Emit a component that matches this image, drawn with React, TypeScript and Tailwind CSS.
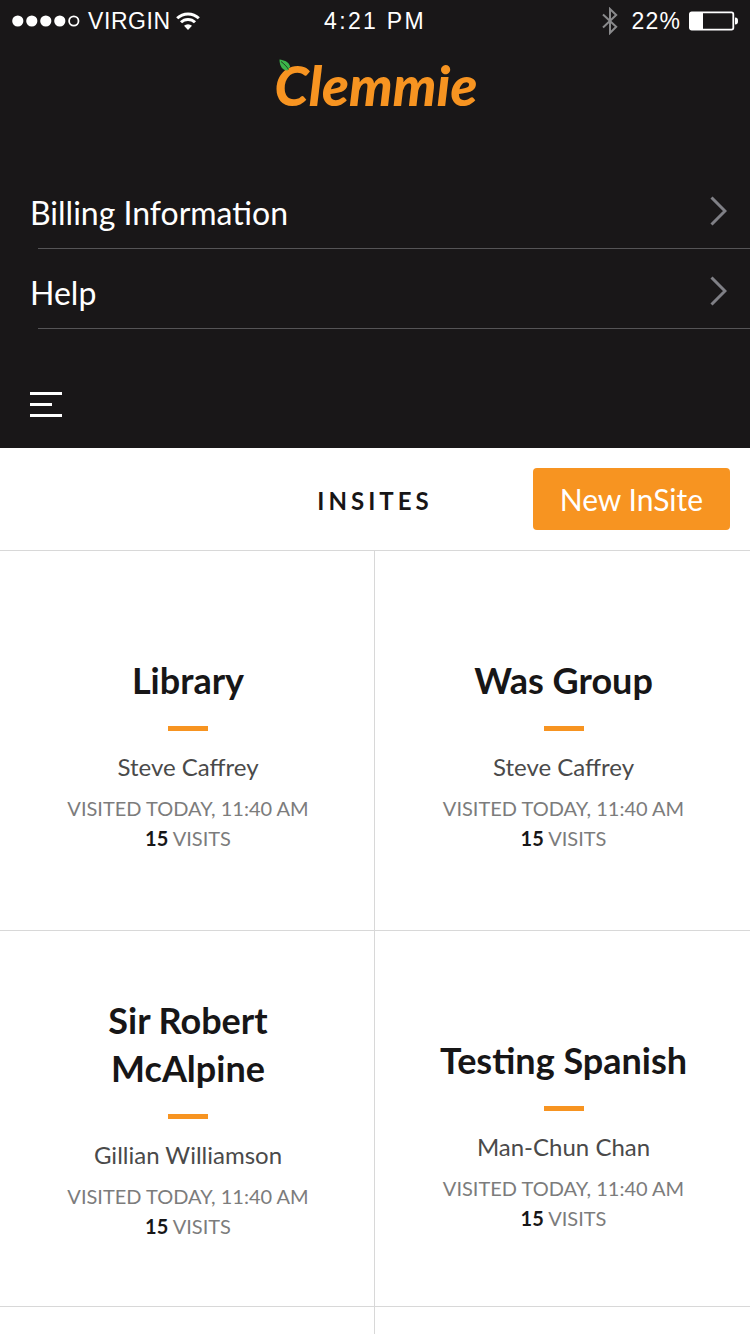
import React from "react";

type InSite = {
  title: string;
  owner: string;
  visited: string;
  visits: number;
  longTitle?: boolean;
};

const menuLinks = ["Billing Information", "Help"];

const insites: InSite[] = [
  { title: "Library", owner: "Steve Caffrey", visited: "VISITED TODAY, 11:40 AM", visits: 15 },
  { title: "Was Group", owner: "Steve Caffrey", visited: "VISITED TODAY, 11:40 AM", visits: 15 },
  { title: "Sir Robert McAlpine", owner: "Gillian Williamson", visited: "VISITED TODAY, 11:40 AM", visits: 15, longTitle: true },
  { title: "Testing Spanish", owner: "Man-Chun Chan", visited: "VISITED TODAY, 11:40 AM", visits: 15 },
];

function SignalDots() {
  return (
    <svg width="68" height="12" viewBox="0 0 68 12" fill="#fff" aria-hidden="true">
      <circle cx="5.8" cy="6" r="5.6" />
      <circle cx="19.8" cy="6" r="5.6" />
      <circle cx="33.8" cy="6" r="5.6" />
      <circle cx="47.8" cy="6" r="5.6" />
      <circle cx="61.8" cy="6" r="4.7" fill="none" stroke="#fff" strokeWidth="1.8" />
    </svg>
  );
}

function WifiIcon() {
  return (
    <svg width="24" height="18" viewBox="0 0 24 18" fill="none" stroke="#fff" strokeWidth="3" aria-hidden="true">
      <path d="M1.2 6.3a15.4 15.4 0 0 1 21.6 0" />
      <path d="M5 10.3a9.9 9.9 0 0 1 14 0" />
      <path d="M12 18l-4-4.2a5.7 5.7 0 0 1 8 0z" fill="#fff" stroke="none" />
    </svg>
  );
}

function BluetoothIcon() {
  return (
    <svg width="16" height="28" viewBox="0 0 16 28" fill="none" stroke="#8a8a8c" strokeWidth="2" aria-hidden="true">
      <path d="M1 7.5l13.2 12.3L8 26V2l6.2 6L1 20.5" />
    </svg>
  );
}

function BatteryIcon() {
  return (
    <svg width="49" height="20" viewBox="0 0 49 20" aria-hidden="true">
      <rect x="0.9" y="1.4" width="43.4" height="17.2" rx="1.8" fill="none" stroke="#fff" strokeWidth="1.8" />
      <rect x="1" y="1.5" width="13" height="17" fill="#fff" />
      <path d="M46 6.500c2.600 0 3 1.500 3 3.500s-.4 3.500-3 3.500z" fill="#fff" />
    </svg>
  );
}

function StatusBar() {
  return (
    <div className="grid h-[42px] grid-cols-[1fr_auto_1fr] items-center px-3 font-['Liberation_Sans',sans-serif] text-[23px] leading-none text-white">
      <div className="flex items-center">
        <SignalDots />
        <span className="mr-[5px] ml-2 tracking-wide">VIRGIN</span>
        <WifiIcon />
      </div>
      <span className="tracking-widest">4:21 PM</span>
      <div className="flex items-center justify-end">
        <BluetoothIcon />
        <span className="mr-2 ml-3.5 tracking-wider">22%</span>
        <BatteryIcon />
      </div>
    </div>
  );
}

function Logo() {
  return (
    <a href="#" className="relative text-[55px] leading-[60px] font-black text-[#f79421] italic">
      Clemmie
      <svg className="absolute top-1 left-1" width="14" height="12" viewBox="0 0 14 12" aria-hidden="true">
        <path d="M0.500 0.500C5 1.500 9.500 2 11.200 7.500L8.500 11.500C3.500 11.500 0.500 7 0.500 0.500z" fill="#3cb54a" />
        <path d="M2 2.500C5 5 7.500 7 9.500 10.500" stroke="#19251a" strokeWidth="0.8" fill="none" />
      </svg>
    </a>
  );
}

function MenuLink({ label }: { label: string }) {
  return (
    <li>
      <a href="#" className="flex h-[79px] items-center justify-between pt-2 pr-[23px] pl-[30px] text-[32px] leading-10">
        <span>{label}</span>
        <svg width="17" height="30" viewBox="0 0 17 30" fill="none" stroke="#808086" strokeWidth="3" className="mb-1" aria-hidden="true">
          <path d="M1.500 1.500L15 15 1.500 28.500" />
        </svg>
      </a>
      <div className="ml-[38px] h-px bg-[#555456]" />
    </li>
  );
}

function InSiteCard({ site }: { site: InSite }) {
  return (
    <article
      className={`flex flex-col items-center border-b border-[#d8d8d8] pb-16 pl-0.5 text-center odd:border-r ${
        site.longTitle ? "pt-[65px]" : "pt-[105px]"
      }`}
    >
      <h2 className="max-w-64 text-4xl leading-[48px] font-bold text-[#171617]">{site.title}</h2>
      <div className="mt-[22px] h-[5px] w-10 bg-[#f79421]" />
      <p className="mt-[21px] text-2xl leading-[30px] text-[#4a4a4a]">{site.owner}</p>
      <p className="mt-[11px] text-xl leading-[30px] text-[#7c7c7c]">
        {site.visited}
        <br />
        <strong className="font-bold text-[#171617]">{site.visits}</strong> VISITS
      </p>
    </article>
  );
}

export default function App() {
  return (
    <div className="min-h-screen bg-white font-[Lato,sans-serif]">
      <header className="bg-[#191718] text-white">
        <StatusBar />
        <div className="flex justify-center pt-[13px] pl-0.5">
          <Logo />
        </div>
        <nav className="pt-[54px]" aria-label="Main">
          <ul>
            {menuLinks.map((label) => (
              <MenuLink key={label} label={label} />
            ))}
          </ul>
        </nav>
        <div className="flex h-[119px] items-end px-[30px] pb-[31px]">
          <button type="button" aria-label="Menu" className="flex flex-col gap-2">
            <span className="h-[3px] w-8 bg-white" />
            <span className="h-[3px] w-[22px] bg-white" />
            <span className="h-[3px] w-8 bg-white" />
          </button>
        </div>
      </header>
      <main>
        <div className="grid h-[103px] grid-cols-[1fr_auto_1fr] items-center border-b border-[#d8d8d8] px-5">
          <h1 className="col-start-2 pt-1 text-2xl font-bold tracking-[4px] text-[#171617]">INSITES</h1>
          <button type="button" className="h-[62px] justify-self-end rounded-sm bg-[#f79421] px-[27px] text-3xl text-white">
            New InSite
          </button>
        </div>
        <section className="grid grid-cols-2 grid-rows-[minmax(380px,auto)_minmax(376px,auto)]" aria-label="InSites">
          {insites.map((site) => (
            <InSiteCard key={site.title} site={site} />
          ))}
          <div className="h-[27px] border-r border-[#d8d8d8]" />
        </section>
      </main>
    </div>
  );
}
